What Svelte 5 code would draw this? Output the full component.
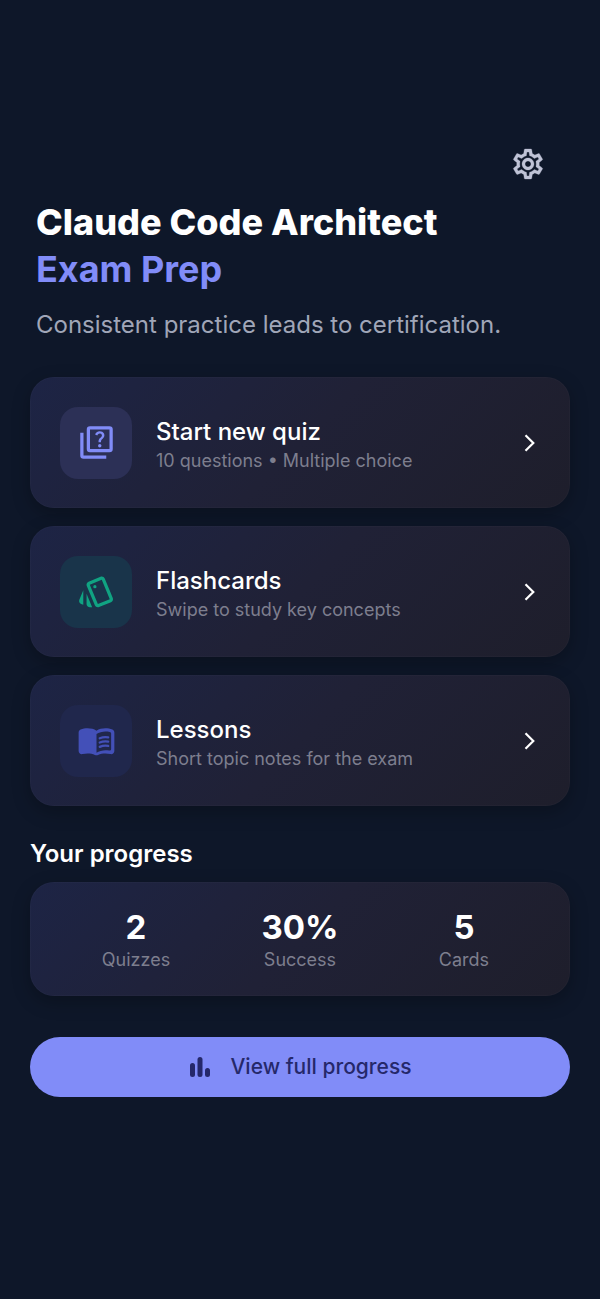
<script lang="ts">
  interface MenuItem {
    id: 'quiz' | 'cards' | 'lessons';
    title: string;
    subtitle: string;
  }

  interface Stat {
    value: string;
    label: string;
  }

  const menu: MenuItem[] = [
    { id: 'quiz', title: 'Start new quiz', subtitle: '10 questions • Multiple choice' },
    { id: 'cards', title: 'Flashcards', subtitle: 'Swipe to study key concepts' },
    { id: 'lessons', title: 'Lessons', subtitle: 'Short topic notes for the exam' }
  ];

  const stats: Stat[] = [
    { value: '2', label: 'Quizzes' },
    { value: '30%', label: 'Success' },
    { value: '5', label: 'Cards' }
  ];
</script>

<main class="home">
  <div class="toolbar">
    <button class="settings" type="button" aria-label="Settings">
      <svg viewBox="0 0 24 24" width="36" height="36" fill="currentColor" stroke="currentColor" stroke-width="0.2" aria-hidden="true">
        <path d="M19.43 12.98c.04-.32.07-.64.07-.98 0-.34-.03-.66-.07-.98l2.11-1.65c.19-.15.24-.42.12-.64l-2-3.46c-.09-.16-.26-.25-.44-.25-.06 0-.12.01-.17.03l-2.49 1c-.52-.4-1.08-.73-1.69-.98l-.38-2.65C14.46 2.18 14.25 2 14 2h-4c-.25 0-.46.18-.49.42l-.38 2.65c-.61.25-1.17.59-1.69.98l-2.49-1c-.06-.02-.12-.03-.18-.03-.17 0-.34.09-.43.25l-2 3.46c-.13.22-.07.49.12.64l2.11 1.65c-.04.32-.07.65-.07.98s.03.66.07.98l-2.11 1.65c-.19.15-.24.42-.12.64l2 3.46c.09.16.26.25.44.25.06 0 .12-.01.17-.03l2.49-1c.52.4 1.08.73 1.69.98l.38 2.65c.03.24.24.42.49.42h4c.25 0 .46-.18.49-.42l.38-2.65c.61-.25 1.17-.59 1.69-.98l2.49 1c.06.02.12.03.18.03.17 0 .34-.09.43-.25l2-3.46c.12-.22.07-.49-.12-.64l-2.11-1.65zm-1.98-1.71c.04.31.05.52.05.73 0 .21-.02.43-.05.73l-.14 1.13.89.7 1.08.84-.7 1.21-1.27-.51-1.04-.42-.9.68c-.43.32-.84.56-1.25.73l-1.06.43-.16 1.13-.2 1.35h-1.4l-.19-1.35-.16-1.13-1.06-.43c-.43-.18-.83-.41-1.23-.71l-.91-.7-1.06.43-1.27.51-.7-1.21 1.08-.84.89-.7-.14-1.13c-.03-.31-.05-.54-.05-.74s.02-.43.05-.73l.14-1.13-.89-.7-1.08-.84.7-1.21 1.27.51 1.04.42.9-.68c.43-.32.84-.56 1.25-.73l1.06-.43.16-1.13.2-1.35h1.39l.19 1.35.16 1.13 1.06.43c.43.18.83.41 1.23.71l.91.7 1.06-.43 1.27-.51.7 1.21-1.07.85-.89.7.14 1.13zM12 8c-2.21 0-4 1.79-4 4s1.79 4 4 4 4-1.79 4-4-1.79-4-4-4zm0 6c-1.1 0-2-.9-2-2s.9-2 2-2 2 .9 2 2-.9 2-2 2z" />
      </svg>
    </button>
  </div>

  <header class="intro">
    <h1 class="intro__title">
      Claude Code Architect
      <span class="intro__accent">Exam Prep</span>
    </h1>
    <p class="intro__text">Consistent practice leads to certification.</p>
  </header>

  <nav class="menu" aria-label="Study modes">
    {#each menu as item (item.id)}
      <button class="card menu-item" type="button">
        <span class="tile tile--{item.id}">
          <svg viewBox="0 0 24 24" width="39" height="39" fill="currentColor" aria-hidden="true">
            {#if item.id === 'quiz'}
              <rect x="7" y="3" width="14" height="14" rx="1" fill="none" stroke="currentColor" stroke-width="2" />
              <path d="M3 6v14a1 1 0 0 0 1 1h14" fill="none" stroke="currentColor" stroke-width="2" />
              <path d="M13.51 10.16c.41-.73 1.18-1.16 1.63-1.8.48-.68.21-1.94-1.14-1.94-.88 0-1.32.67-1.5 1.23l-1.37-.57C11.51 5.96 12.52 5 13.99 5c1.23 0 2.08.56 2.51 1.26.37.6.58 1.73.01 2.57-.63.93-1.23 1.21-1.56 1.81-.13.24-.18.4-.18 1.18h-1.52c.01-.41-.06-1.08.26-1.66z" />
              <circle cx="14" cy="13.95" r="1.05" />
            {:else if item.id === 'cards'}
              <path d="M2.53 19.65l1.34.56v-9.03l-2.43 5.86c-.41 1.02.08 2.19 1.09 2.61zm19.5-3.7L17.07 3.98c-.31-.75-1.04-1.21-1.81-1.23-.26 0-.53.04-.79.15L7.1 5.95c-.75.31-1.21 1.03-1.23 1.8-.01.27.04.54.15.8l4.96 11.97c.31.76 1.05 1.22 1.83 1.23.26 0 .52-.05.77-.15l7.36-3.05c1.02-.42 1.51-1.59 1.09-2.6zm-9.2 3.8L7.87 7.79l7.35-3.04h.01l4.95 11.95-7.35 3.05z" />
              <circle cx="11" cy="9" r="1" />
              <path d="M5.88 19.75c0 1.1.9 2 2 2h1.45l-3.45-8.34v6.34z" />
            {:else}
              <path d="M17.5 4.5c-1.95 0-4.05.4-5.5 1.5-1.45-1.1-3.55-1.5-5.5-1.5-1.45 0-2.99.22-4.28.79C1.49 5.62 1 6.33 1 7.14v11.28c0 1.3 1.22 2.26 2.48 1.94.98-.25 2.02-.36 3.02-.36 1.56 0 3.22.26 4.56.92.6.3 1.28.3 1.87 0 1.34-.67 3-.92 4.56-.92 1 0 2.04.11 3.02.36 1.26.33 2.48-.63 2.48-1.94V7.14c0-.81-.49-1.52-1.22-1.85-1.28-.57-2.82-.79-4.27-.79zM21 17.23c0 .63-.58 1.09-1.2.98-.75-.14-1.53-.2-2.3-.2-1.7 0-4.15.65-5.5 1.5V8c1.35-.85 3.8-1.5 5.5-1.5.92 0 1.83.09 2.7.28.46.1.8.51.8.98v9.47z" />
              <path d="M14 10.6q2.5-1 5.2-.55M14 13.25q2.5-1 5.2-.55M14 15.9q2.5-1 5.2-.55" fill="none" stroke="currentColor" stroke-width="1.4" stroke-linecap="round" />
            {/if}
          </svg>
        </span>
        <span class="menu-item__body">
          <span class="menu-item__title">{item.title}</span>
          <span class="menu-item__subtitle">{item.subtitle}</span>
        </span>
        <svg class="menu-item__chevron" viewBox="0 0 20 20" width="20" height="20" aria-hidden="true">
          <path d="M5.5 2.2l7.8 7.8-7.8 7.8" />
        </svg>
      </button>
    {/each}
  </nav>

  <section class="progress" aria-labelledby="progress-title">
    <h2 class="progress__title" id="progress-title">Your progress</h2>
    <dl class="card stats">
      {#each stats as stat (stat.label)}
        <div class="stat">
          <dt class="stat__label">{stat.label}</dt>
          <dd class="stat__value">{stat.value}</dd>
        </div>
      {/each}
    </dl>
  </section>

  <button class="primary" type="button">
    <svg viewBox="0 0 24 24" width="24" height="24" fill="currentColor" aria-hidden="true">
      <rect x="2" y="8" width="5" height="14" rx="2.5" />
      <rect x="9.5" y="2" width="5" height="20" rx="2.5" />
      <rect x="17" y="13" width="5" height="9" rx="2.5" />
    </svg>
    View full progress
  </button>
</main>

<style>
  :global(body) {
    margin: 0;
    background: #0f172a;
  }

  .home {
    box-sizing: border-box;
    min-height: 100vh;
    padding: 128px 30px 60px;
    display: flex;
    flex-direction: column;
    background: #0e1729;
    color: #fff;
    font-family: Inter, 'Liberation Sans', sans-serif;
  }

  button {
    margin: 0;
    border: 0;
    font: inherit;
    color: inherit;
    cursor: pointer;
  }

  .toolbar {
    display: flex;
    justify-content: flex-end;
    padding-right: 6px;
  }

  .settings {
    display: grid;
    place-items: center;
    width: 72px;
    height: 71px;
    padding: 0;
    background: none;
    color: #bfc3d6;
  }

  .intro {
    padding: 0 6px;
  }

  .intro__title {
    margin: 0;
    font-size: 36px;
    line-height: 47px;
    font-weight: 800;
  }

  .intro__accent {
    display: block;
    color: #818cf8;
    font-weight: 700;
  }

  .intro__text {
    margin: 14px 0 0;
    font-size: 24px;
    line-height: 36px;
    color: #a0a6b8;
  }

  .menu {
    display: flex;
    flex-direction: column;
    gap: 18px;
    margin-top: 34px;
  }

  .card {
    border-radius: 24px;
    background: linear-gradient(135deg, #1d2445 0%, #202136 50%, #1e1e2b 100%);
    box-shadow:
      inset 0 0 0 1px rgba(255, 255, 255, 0.02),
      0 6px 18px rgba(0, 0, 0, 0.25);
  }

  .menu-item {
    display: flex;
    align-items: center;
    gap: 24px;
    width: 100%;
    height: 131px;
    padding: 0 30px;
    text-align: left;
  }

  .tile {
    display: grid;
    place-items: center;
    flex: none;
    width: 72px;
    height: 72px;
    border-radius: 18px;
  }

  .tile--quiz {
    background: #2c3056;
    color: #818cf8;
  }

  .tile--cards {
    background: #19344a;
    color: #10a382;
  }

  .tile--lessons {
    background: #20274c;
    color: #4350b8;
  }

  .menu-item__body {
    display: flex;
    flex-direction: column;
    flex: 1;
    min-width: 0;
    padding-top: 4px;
  }

  .menu-item__title {
    font-size: 24px;
    line-height: 32px;
    font-weight: 500;
  }

  .menu-item__subtitle {
    font-size: 18px;
    line-height: 26px;
    color: #7d7e8e;
  }

  .menu-item__chevron {
    flex: none;
    fill: none;
    stroke: #fff;
    stroke-width: 2.2;
  }

  .progress {
    margin-top: 30px;
  }

  .progress__title {
    margin: 0;
    font-size: 24px;
    line-height: 36px;
    font-weight: 600;
  }

  .stats {
    display: flex;
    margin: 10px 0 0;
    padding: 24px;
  }

  .stat {
    display: flex;
    flex: 1;
    flex-direction: column-reverse;
    align-items: center;
  }

  .stat__value {
    margin: 0;
    font-size: 33px;
    line-height: 42px;
    font-weight: 700;
  }

  .stat__label {
    font-size: 18px;
    line-height: 24px;
    color: #7d7e8e;
  }

  .primary {
    display: flex;
    align-items: center;
    justify-content: center;
    gap: 18px;
    height: 60px;
    margin-top: 41px;
    padding: 0 24px;
    border-radius: 30px;
    background: #818cf8;
    color: #25286a;
    font-size: 21px;
    line-height: 30px;
    font-weight: 500;
  }
</style>
